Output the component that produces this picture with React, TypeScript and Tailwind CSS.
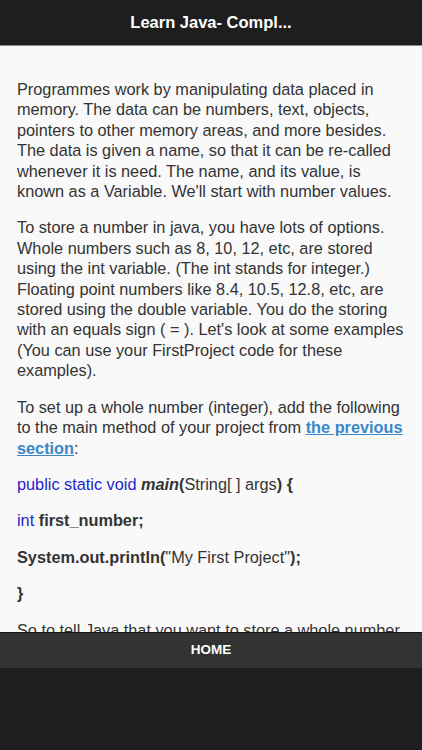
import React from 'react';

const font = { fontFamily: '"Liberation Sans", Arial, sans-serif' };

const App: React.FC = () => {
  return (
    <div className="flex h-[750px] w-[422px] flex-col overflow-hidden bg-[#1e1e1e]" style={font}>
      <header className="flex h-[46px] shrink-0 items-center justify-center border-b border-[#8a8a8a] bg-[#1e1e1e] pb-[1px]">
        <h1 className="text-[16.5px] font-bold text-white">Learn Java- Compl...</h1>
      </header>

      <main className="h-[586px] shrink-0 overflow-hidden bg-[#f9f9f9] px-[17px] pt-[17px] text-[16.3px] leading-[20.4px] text-[#333]">
        <p className="my-[16px]">
          Programmes work by manipulating data placed in memory. The data can be numbers, text, objects,
          pointers to other memory areas, and more besides. The data is given a name, so that it can be
          re-called whenever it is need. The name, and its value, is known as a Variable. We'll start
          with number values.
        </p>
        <p className="my-[16px]">
          To store a number in java, you have lots of options. Whole numbers such as 8, 10, 12, etc, are
          stored using the int variable. (The int stands for integer.) Floating point numbers like 8.4,
          10.5, 12.8, etc, are stored using the double variable. You do the storing with an equals sign
          ( = ). Let's look at some examples (You can use your FirstProject code for these examples).
        </p>
        <p className="my-[16px]">
          To set up a whole number (integer), add the following to the main method of your project from{' '}
          <a className="font-bold text-[#3b87c6] underline">the previous section</a>:
        </p>
        <p className="my-[16px]">
          <span className="text-[#1f1fcc]">public static void </span>
          <b className="italic">main</b>
          <b>(</b>String[ ] args<b>) {'{'}</b>
        </p>
        <p className="my-[16px]">
          <span className="text-[#1f1fcc]">int </span>
          <b>first_number;</b>
        </p>
        <p className="my-[16px]">
          <b>System.out.println(</b>"My First Project"<b>);</b>
        </p>
        <p className="my-[16px]">
          <b>{'}'}</b>
        </p>
        <p className="my-[16px]">
          So to tell Java that you want to store a whole number, you first type the word int, followed by
          a space.
        </p>
      </main>

      <nav className="flex h-[36px] shrink-0 items-center justify-center border-t border-[#151515] bg-[#333333]">
        <span className="text-[13.5px] font-bold text-white">HOME</span>
      </nav>

      <div className="flex-1 bg-[#1e1e1e]" />
    </div>
  );
};

export default App;
